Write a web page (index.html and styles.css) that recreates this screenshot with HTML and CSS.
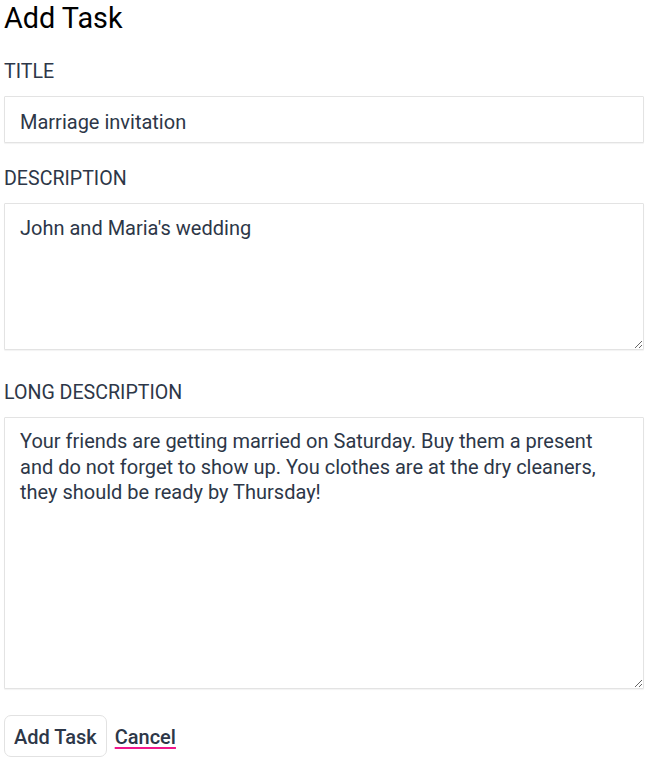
FILE: index.html
```html
<!DOCTYPE html>
<html>
<head>
<meta charset="utf-8">
<title>Add Task</title>
<link rel="stylesheet" href="styles.css">
</head>
<body>
<div class="page">
  <h1 class="title">Add Task</h1>
  <form class="task-form">
    <div class="field field-first">
      <label class="field-label" for="title">Title</label>
      <input class="field-input" id="title" type="text" value="Marriage invitation">
    </div>
    <div class="field field-after-input">
      <label class="field-label" for="desc">Description</label>
      <textarea class="field-area field-area-short" id="desc">John and Maria's wedding</textarea>
    </div>
    <div class="field field-after-area">
      <label class="field-label" for="long">Long Description</label>
      <textarea class="field-area field-area-long" id="long">Your friends are getting married on Saturday. Buy them a present and do not forget to show up. You clothes are at the dry cleaners, they should be ready by Thursday!</textarea>
    </div>
    <div class="actions">
      <button class="btn" type="button">Add Task</button>
      <a class="cancel" href="#">Cancel</a>
    </div>
  </form>
</div>
</body>
</html>
```
FILE: styles.css
```css
html, body {
  margin: 0;
  padding: 0;
  background: #ffffff;
}

body {
  font-family: Roboto, "Noto Sans", sans-serif;
  color: #2d3748;
}

.page {
  width: 640px;
  padding: 0 4px;
}

.title {
  margin: 0;
  font-size: 28.8px;
  font-weight: 400;
  line-height: 36px;
  color: #000000;
}

.task-form {
  display: flex;
  flex-direction: column;
}

.field {
  display: flex;
  flex-direction: column;
}

.field-first {
  margin-top: 24px;
}

.field-after-input {
  margin-top: 24px;
}

.field-after-area {
  margin-top: 31px;
}

.field-label {
  font-size: 19.6px;
  line-height: 24px;
  text-transform: uppercase;
  margin-bottom: 12px;
  color: #2d3748;
}

.field-input,
.field-area {
  box-sizing: border-box;
  width: 100%;
  margin: 0;
  border: 1px solid #e3e3e3;
  border-radius: 1px;
  box-shadow: 0 1px 1px rgba(0, 0, 0, 0.05);
  font-family: Roboto, "Noto Sans", sans-serif;
  font-size: 20px;
  color: #2d3748;
  background: #ffffff;
  outline: none;
}

.field-input {
  height: 47px;
  padding: 5px 15px 0 15px;
}

.field-area {
  display: block;
  line-height: 25.5px;
  padding: 11px 20px 8px 15px;
  resize: vertical;
}

.field-area-short {
  height: 147px;
  padding-top: 12px;
}

.field-area-long {
  height: 272px;
}

.actions {
  display: flex;
  align-items: center;
  gap: 8px;
  margin-top: 26px;
}

.btn {
  box-sizing: border-box;
  height: 42px;
  padding: 2px 9px 0 9px;
  border: 1px solid #e2e2e2;
  border-radius: 7px;
  background: #ffffff;
  font-family: Roboto, "Noto Sans", sans-serif;
  font-size: 20px;
  font-weight: 500;
  color: #2d3748;
  cursor: pointer;
}

.cancel {
  font-size: 20px;
  font-weight: 500;
  padding-top: 2px;
  color: #2d3748;
  text-decoration: underline;
  text-decoration-color: #f0168a;
  text-decoration-thickness: 2px;
  text-underline-offset: 3px;
}
```
